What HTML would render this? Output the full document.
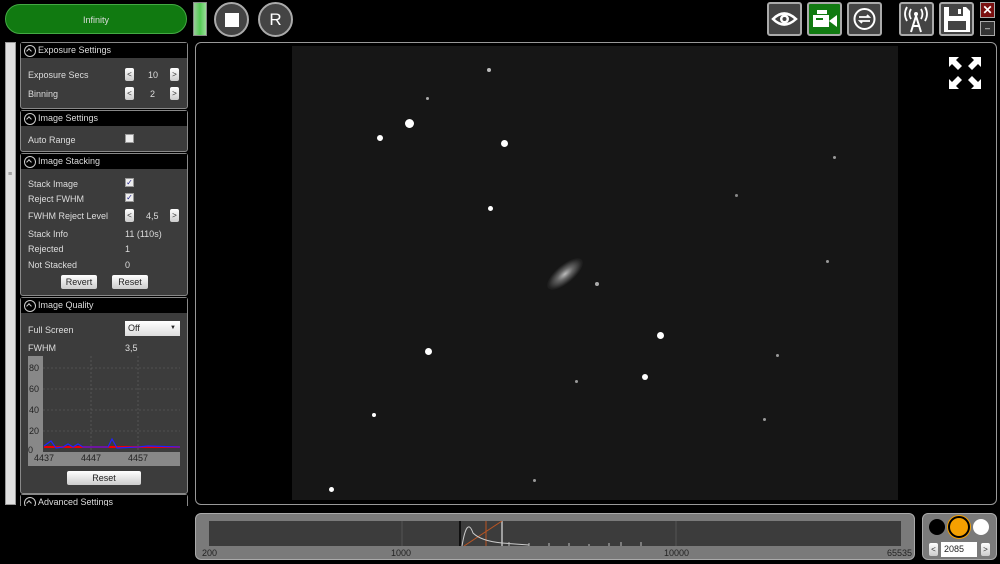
<!DOCTYPE html>
<html><head><meta charset="utf-8"><style>
*{margin:0;padding:0;box-sizing:border-box}
body{width:1000px;height:564px;background:#000;font-family:"Liberation Sans",sans-serif;font-size:9px;color:#ddd;position:relative;overflow:hidden}
.a{position:absolute}
.sec{position:absolute;left:20px;width:168px;background:#3c3c3c;border:1px solid #888;border-radius:3px}
.hd{position:absolute;left:0;right:0;top:0;height:15px;background:#000;color:#ddd;font-size:9px;line-height:15px;padding-left:17px}
.hd:before{content:"";position:absolute;left:3px;top:2px;width:10px;height:10px;border:1px solid #ccc;border-radius:50%}
.hd:after{content:"";position:absolute;left:6px;top:6px;width:3px;height:3px;border-left:1px solid #ccc;border-top:1px solid #ccc;transform:rotate(45deg)}
.lb{position:absolute;left:7px;font-size:9px;color:#ddd}
.v{position:absolute;font-size:9px;color:#ddd}
.sb{position:absolute;width:9px;height:13px;background:linear-gradient(#fff,#ccc);border-radius:2px;color:#333;font-size:8px;text-align:center;line-height:13px}
.cb{position:absolute;width:9px;height:9px;background:#eee;border:1px solid #999;color:#228;font-size:8px;line-height:8px;text-align:center}
.btn{position:absolute;height:14px;background:linear-gradient(#fff,#ccc);border-radius:2px;color:#222;font-size:9px;text-align:center;line-height:14px}
.ib{position:absolute;top:2px;width:35px;height:34px;border:2px solid #aaa;border-radius:3px;background:#444}
.st{position:absolute;border-radius:50%;background:#fff}
</style></head><body>
<div class="a" style="left:5px;top:4px;width:182px;height:30px;border-radius:15px;background:#117a11;border:1px solid #4a4;color:#ddd;text-align:center;line-height:30px;font-size:9px">Infinity</div>
<div class="a" style="left:193px;top:2px;width:14px;height:34px;background:linear-gradient(90deg,#9c9,#5c5,#9d9);border:1px solid #888"></div>
<div class="a" style="left:214px;top:2px;width:35px;height:35px;border-radius:50%;background:#444;border:2px solid #aaa"><div class="a" style="left:9px;top:9px;width:14px;height:14px;background:#fff"></div></div>
<div class="a" style="left:258px;top:2px;width:35px;height:35px;border-radius:50%;background:#444;border:2px solid #aaa;color:#fff;font-size:17px;text-align:center;line-height:31px">R</div>
<div class="ib" style="left:767px"><svg width="31" height="30"><path d="M4 15Q15 4 27 15Q15 26 4 15Z" fill="none" stroke="#fff" stroke-width="2.5"/><circle cx="15.5" cy="15" r="4.5" fill="#fff"/><circle cx="15.5" cy="15" r="2" fill="#444"/></svg></div>
<div class="ib" style="left:807px;background:#117a11"><svg width="31" height="30"><rect x="4" y="11" width="16" height="12" fill="#fff"/><rect x="8" y="6" width="10" height="4" fill="#fff"/><path d="M20 17L28 11V23Z" fill="#fff"/><rect x="7" y="14" width="7" height="2" fill="#117a11"/></svg></div>
<div class="ib" style="left:847px"><svg width="31" height="30"><circle cx="15.5" cy="15" r="10" fill="none" stroke="#fff" stroke-width="2"/><path d="M10 13H20L18 11M21 17H11L13 19" fill="none" stroke="#fff" stroke-width="1.8"/></svg></div>
<div class="ib" style="left:899px"><svg width="31" height="30"><path d="M10 28L15 12L20 28M12 22H18" fill="none" stroke="#fff" stroke-width="2"/><circle cx="15" cy="10" r="2" fill="#fff"/><path d="M10 5Q7 10 10 15M20 5Q23 10 20 15M6 3Q2 10 6 17M24 3Q28 10 24 17" fill="none" stroke="#fff" stroke-width="1.8"/></svg></div>
<div class="ib" style="left:939px"><svg width="31" height="30"><path d="M3 3H25L29 7V28H3Z" fill="#fff"/><rect x="8" y="3" width="14" height="9" fill="#444"/><rect x="17" y="5" width="3" height="5" fill="#fff"/><rect x="7" y="17" width="18" height="9" fill="#444"/></svg></div>
<div class="a" style="left:980px;top:2px;width:15px;height:16px;background:#7a1010;border:1px solid #aaa;color:#fff;font-size:12px;font-weight:bold;text-align:center;line-height:14px">✕</div>
<div class="a" style="left:980px;top:21px;width:15px;height:15px;background:#333;border:1px solid #aaa;color:#fff;text-align:center;line-height:12px">–</div>

<div class="a" style="left:5px;top:42px;width:11px;height:463px;background:#e0e0e0;border:1px solid #999"><div class="a" style="left:2px;top:128px;color:#666;font-size:7px">≡</div></div>

<div class="sec" style="top:42px;height:67px"><div class="hd">Exposure Settings</div>
<div class="lb" style="top:27px">Exposure Secs</div><div class="sb" style="left:104px;top:25px">&lt;</div><div class="v" style="left:127px;top:27px">10</div><div class="sb" style="left:149px;top:25px">&gt;</div>
<div class="lb" style="top:46px">Binning</div><div class="sb" style="left:104px;top:44px">&lt;</div><div class="v" style="left:129px;top:46px">2</div><div class="sb" style="left:149px;top:44px">&gt;</div></div>
<div class="sec" style="top:110px;height:42px"><div class="hd">Image Settings</div><div class="lb" style="top:24px">Auto Range</div><div class="cb" style="left:104px;top:23px"></div></div>
<div class="sec" style="top:153px;height:143px"><div class="hd">Image Stacking</div>
<div class="lb" style="top:25px">Stack Image</div><div class="cb" style="left:104px;top:24px">✓</div>
<div class="lb" style="top:40px">Reject FWHM</div><div class="cb" style="left:104px;top:39px">✓</div>
<div class="lb" style="top:57px">FWHM Reject Level</div><div class="sb" style="left:104px;top:55px">&lt;</div><div class="v" style="left:125px;top:57px">4,5</div><div class="sb" style="left:149px;top:55px">&gt;</div>
<div class="lb" style="top:75px">Stack Info</div><div class="v" style="left:104px;top:75px">11 (110s)</div>
<div class="lb" style="top:90px">Rejected</div><div class="v" style="left:104px;top:90px">1</div>
<div class="lb" style="top:106px">Not Stacked</div><div class="v" style="left:104px;top:106px">0</div>
<div class="btn" style="left:40px;top:121px;width:36px">Revert</div><div class="btn" style="left:91px;top:121px;width:36px">Reset</div></div>
<div class="sec" style="top:297px;height:197px"><div class="hd">Image Quality</div>
<div class="lb" style="top:27px">Full Screen</div><div class="a" style="left:104px;top:23px;width:55px;height:15px;background:linear-gradient(#fff,#ddd);color:#222;padding-left:3px;line-height:15px">Off<span style="position:absolute;right:4px;font-size:6px">▼</span></div>
<div class="lb" style="top:45px">FWHM</div><div class="v" style="left:104px;top:45px">3,5</div>
<div class="a" style="left:7px;top:58px;width:152px;height:110px;background:#888"></div>
<div class="a" style="left:22px;top:58px;width:137px;height:96px;background:#3c3c3c"></div>
<svg class="a" style="left:7px;top:58px" width="152" height="110"><g stroke="#666" stroke-dasharray="2,2" stroke-width="0.6"><line x1="15" y1="12" x2="152" y2="12"/><line x1="15" y1="33" x2="152" y2="33"/><line x1="15" y1="54" x2="152" y2="54"/><line x1="15" y1="75" x2="152" y2="75"/><line x1="63" y1="0" x2="63" y2="96"/><line x1="110" y1="0" x2="110" y2="96"/></g>
<line x1="16" y1="91" x2="152" y2="91" stroke="#e00" stroke-width="2"/><polyline points="16,90 23,85 28,92 35,91 40,88 45,91 50,88 55,91 80,91 84,83 89,92 110,91 120,90 152,91" fill="none" stroke="#22f" stroke-width="1.2"/>
<g fill="#222" font-size="9" font-family="Liberation Sans"><text x="1" y="15">80</text><text x="1" y="36">60</text><text x="1" y="57">40</text><text x="1" y="78">20</text><text x="0" y="97">0</text><text x="6" y="105">4437</text><text x="53" y="105">4447</text><text x="100" y="105">4457</text></g></svg>
<div class="btn" style="left:46px;top:173px;width:74px">Reset</div></div>
<div class="sec" style="top:494px;height:20px"><div class="hd">Advanced Settings</div></div>
<div class="a" style="left:0;top:506px;width:195px;height:58px;background:#000"></div>

<div class="a" style="left:195px;top:42px;width:802px;height:463px;border:1px solid #999;border-radius:6px;background:#000"></div>
<div class="a" style="left:292px;top:46px;width:606px;height:454px;background:#161616"></div>
<div class="a" style="left:543px;top:265px;width:44px;height:18px;border-radius:50%;background:radial-gradient(#bbb 0%,#666 30%,rgba(50,50,50,.4) 65%,transparent 80%);transform:rotate(-40deg)"></div>
<div class="st" style="left:405px;top:119px;width:9px;height:9px"></div>
<div class="st" style="left:501px;top:140px;width:7px;height:7px"></div>
<div class="st" style="left:377px;top:135px;width:6px;height:6px"></div>
<div class="st" style="left:488px;top:206px;width:5px;height:5px"></div>
<div class="st" style="left:425px;top:348px;width:7px;height:7px"></div>
<div class="st" style="left:657px;top:332px;width:7px;height:7px"></div>
<div class="st" style="left:642px;top:374px;width:6px;height:6px"></div>
<div class="st" style="left:372px;top:413px;width:4px;height:4px"></div>
<div class="st" style="left:329px;top:487px;width:5px;height:5px"></div>
<div class="st" style="left:487px;top:68px;width:4px;height:4px;background:#bbb"></div>
<div class="st" style="left:426px;top:97px;width:3px;height:3px;background:#aaa"></div>
<div class="st" style="left:833px;top:156px;width:3px;height:3px;background:#999"></div>
<div class="st" style="left:826px;top:260px;width:3px;height:3px;background:#999"></div>
<div class="st" style="left:776px;top:354px;width:3px;height:3px;background:#999"></div>
<div class="st" style="left:763px;top:418px;width:3px;height:3px;background:#999"></div>
<div class="st" style="left:575px;top:380px;width:3px;height:3px;background:#999"></div>
<div class="st" style="left:533px;top:479px;width:3px;height:3px;background:#999"></div>
<div class="st" style="left:735px;top:194px;width:3px;height:3px;background:#888"></div>
<div class="st" style="left:595px;top:282px;width:4px;height:4px;background:#aaa"></div>
<svg class="a" style="left:947px;top:55px" width="36" height="36" fill="#fff"><path d="M2 2H12L9 5L15 11L11 15L5 9L2 12Z"/><path d="M34 2H24L27 5L21 11L25 15L31 9L34 12Z"/><path d="M2 34H12L9 31L15 25L11 21L5 27L2 24Z"/><path d="M34 34H24L27 31L21 25L25 21L31 27L34 24Z"/></svg>

<div class="a" style="left:195px;top:513px;width:720px;height:47px;background:#7a7a7a;border:1px solid #aaa;border-radius:6px"></div>
<div class="a" style="left:209px;top:521px;width:692px;height:25px;background:#3c3c3c"></div>
<svg class="a" style="left:209px;top:521px" width="692" height="25"><g stroke="#555"><line x1="193" y1="0" x2="193" y2="25"/><line x1="467" y1="0" x2="467" y2="25"/></g><line x1="251" y1="0" x2="251" y2="25" stroke="#000" stroke-width="1.5"/><line x1="293" y1="0" x2="293" y2="25" stroke="#fff"/><line x1="277" y1="0" x2="277" y2="25" stroke="#b52"/><path d="M255 25L293 0" stroke="#b52" fill="none"/><path d="M253 25Q258 -5 264 12Q272 20 293 22L320 24" stroke="#ccc" fill="none"/><g stroke="#bbb"><line x1="300" y1="21" x2="300" y2="25"/><line x1="320" y1="22" x2="320" y2="25"/><line x1="340" y1="22" x2="340" y2="25"/><line x1="360" y1="22" x2="360" y2="25"/><line x1="380" y1="23" x2="380" y2="25"/><line x1="400" y1="22" x2="400" y2="25"/><line x1="412" y1="21" x2="412" y2="25"/><line x1="432" y1="21" x2="432" y2="25"/></g></svg>
<div class="a" style="left:202px;top:548px;color:#222;font-size:9px">200</div>
<div class="a" style="left:391px;top:548px;color:#222;font-size:9px">1000</div>
<div class="a" style="left:664px;top:548px;color:#222;font-size:9px">10000</div>
<div class="a" style="left:887px;top:548px;color:#222;font-size:9px">65535</div>
<div class="a" style="left:922px;top:513px;width:75px;height:47px;background:#7a7a7a;border:1px solid #aaa;border-radius:6px"></div>
<div class="a" style="left:929px;top:519px;width:16px;height:16px;border-radius:50%;background:#000"></div>
<div class="a" style="left:948px;top:516px;width:22px;height:22px;border-radius:50%;background:#f5a000;border:2px solid #000;box-shadow:0 0 0 1px #f5a000"></div>
<div class="a" style="left:973px;top:519px;width:16px;height:16px;border-radius:50%;background:#fff"></div>
<div class="sb" style="left:929px;top:543px">&lt;</div>
<div class="a" style="left:941px;top:542px;width:36px;height:15px;background:#fff;color:#222;font-size:9px;line-height:15px;padding-left:3px">2085</div>
<div class="sb" style="left:981px;top:543px">&gt;</div>
</body></html>
